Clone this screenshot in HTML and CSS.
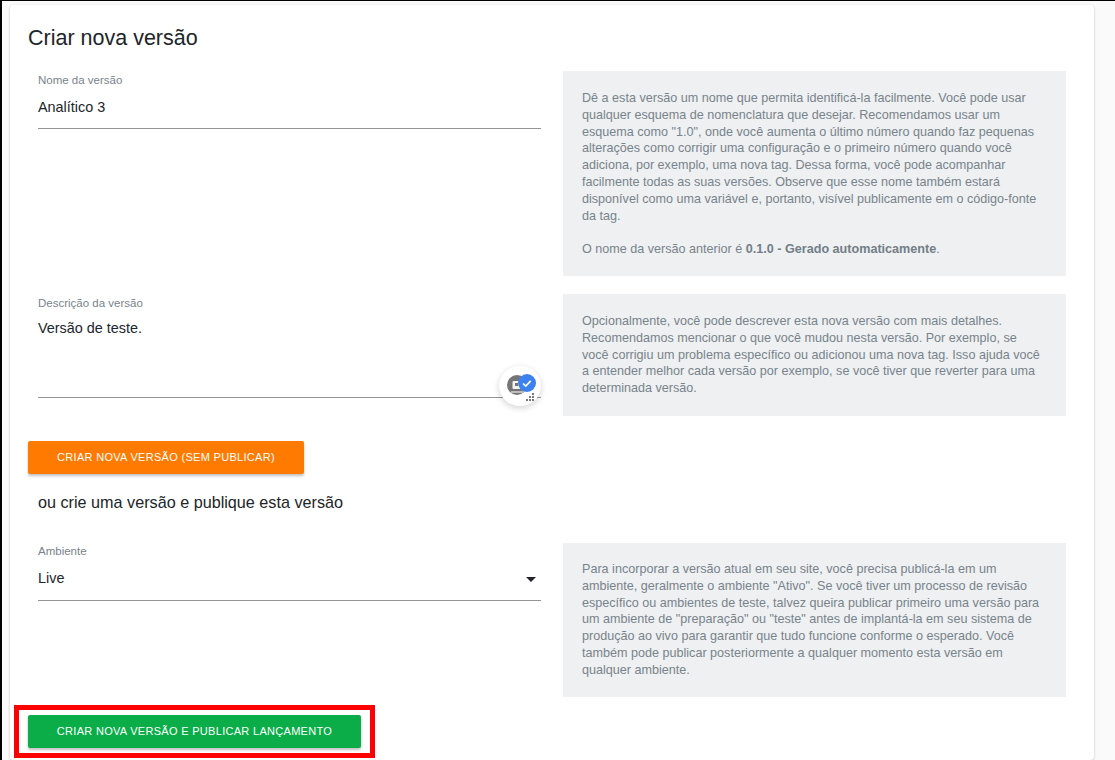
FILE: index.html
```html
<!DOCTYPE html>
<html lang="pt">
<head>
<meta charset="utf-8">
<title>Criar nova versão</title>
<link rel="stylesheet" href="styles.css">
</head>
<body>
<main class="card">
  <h1 class="title">Criar nova versão</h1>

  <section class="row row-name">
    <div class="field">
      <label class="label">Nome da versão</label>
      <div class="value">Analítico 3</div>
    </div>
    <aside class="help help-name">
      <p>Dê a esta versão um nome que permita identificá-la facilmente. Você pode usar qualquer esquema de nomenclatura que desejar. Recomendamos usar um esquema como "1.0", onde você aumenta o último número quando faz pequenas alterações como corrigir uma configuração e o primeiro número quando você adiciona, por exemplo, uma nova tag. Dessa forma, você pode acompanhar facilmente todas as suas versões. Observe que esse nome também estará disponível como uma variável e, portanto, visível publicamente em o código-fonte da tag.</p>
      <p class="para-gap">O nome da versão anterior é <strong>0.1.0 - Gerado automaticamente</strong>.</p>
    </aside>
  </section>

  <section class="row row-desc">
    <div class="field">
      <label class="label">Descrição da versão</label>
      <div class="value value-area">Versão de teste.</div>
      <div class="grammar">
        <svg class="grammar-icon" width="42" height="42" viewBox="0 0 42 42" aria-hidden="true">
          <circle cx="18" cy="19" r="10" fill="#757575"/>
          <rect x="13.500" y="15" width="8" height="8" rx="1" fill="#f2f2f2"/>
          <rect x="16" y="17" width="3" height="3" fill="#757575"/>
          <rect x="12" y="25" width="13" height="2" fill="#bdbdbd"/>
          <circle cx="28" cy="17" r="9" fill="#3b82f0"/>
          <path d="M24 17.500l2.800 2.600 4.900-5.200" fill="none" stroke="#fff" stroke-width="1.700"/>
          <g fill="#777">
            <rect x="33" y="27" width="2" height="2"/>
            <rect x="30" y="30" width="2" height="2"/>
            <rect x="33" y="30" width="2" height="2"/>
            <rect x="27" y="33" width="2" height="2"/>
            <rect x="30" y="33" width="2" height="2"/>
            <rect x="33" y="33" width="2" height="2"/>
          </g>
        </svg>
      </div>
    </div>
    <aside class="help help-desc">
      <p>Opcionalmente, você pode descrever esta nova versão com mais detalhes. Recomendamos mencionar o que você mudou nesta versão. Por exemplo, se você corrigiu um problema específico ou adicionou uma nova tag. Isso ajuda você a entender melhor cada versão por exemplo, se você tiver que reverter para uma determinada versão.</p>
    </aside>
  </section>

  <button class="btn btn-orange" type="button">Criar nova versão (sem publicar)</button>

  <p class="or-text">ou crie uma versão e publique esta versão</p>

  <section class="row row-env">
    <div class="field">
      <label class="label label-env">Ambiente</label>
      <div class="value value-select">Live<span class="caret"></span></div>
    </div>
    <aside class="help help-env">
      <p>Para incorporar a versão atual em seu site, você precisa publicá-la em um ambiente, geralmente o ambiente "Ativo". Se você tiver um processo de revisão específico ou ambientes de teste, talvez queira publicar primeiro uma versão para um ambiente de "preparação" ou "teste" antes de implantá-la em seu sistema de produção ao vivo para garantir que tudo funcione conforme o esperado. Você também pode publicar posteriormente a qualquer momento esta versão em qualquer ambiente.</p>
    </aside>
  </section>

  <div class="highlight">
    <button class="btn btn-green" type="button">Criar nova versão e publicar lançamento</button>
  </div>
</main>
</body>
</html>
```
FILE: styles.css
```css
* {
  box-sizing: border-box;
}

html,
body {
  height: 760px;
  overflow: hidden;
}

body {
  margin: 0;
  padding: 4px 21px 0 8px;
  background: #fafafa;
  border-top: 1px solid #000;
  border-left: 2px solid #000;
  font-family: "Liberation Sans", Arial, sans-serif;
  color: #212529;
}

.card {
  position: relative;
  height: 755px;
  padding: 1px 28px 0 18px;
  background: #fff;
  border-radius: 4px;
  box-shadow: 0 1px 3px rgba(0, 0, 0, 0.2);
}

.title {
  margin: 17px 0 0;
  font-size: 21.500px;
  line-height: 30px;
  font-weight: 400;
}

.row {
  display: grid;
  grid-template-columns: 503px 503px;
  column-gap: 22px;
  margin-left: 10px;
}

.row-name {
  margin-top: 18px;
  height: 205px;
}

.row-desc {
  margin-top: 18px;
  height: 122px;
}

.row-env {
  margin-top: 31px;
  height: 154px;
}

.field {
  position: relative;
}

.label {
  display: block;
  margin-top: 2px;
  font-size: 11.500px;
  line-height: 14px;
  color: #78838c;
}

.label-env {
  margin-top: 1px;
}

.value {
  height: 42px;
  padding-top: 10px;
  font-size: 14.400px;
  line-height: 20px;
  color: #212529;
  border-bottom: 1px solid #949494;
}

.value-area {
  height: 88px;
  padding-top: 8px;
}

.value-select {
  display: flex;
  justify-content: space-between;
  height: 43px;
  padding-right: 5px;
}

.caret {
  width: 0;
  height: 0;
  margin-top: 9px;
  border-left: 5px solid transparent;
  border-right: 5px solid transparent;
  border-top: 5px solid #212529;
}

.grammar {
  position: absolute;
  left: 461px;
  top: 72px;
  width: 42px;
  height: 40px;
  border-radius: 50%;
  background: #fff;
  box-shadow: 0 2px 6px rgba(0, 0, 0, 0.18);
}

.grammar-icon {
  display: block;
}

.help {
  padding: 19px 19px 0;
  background: #eef0f1;
  font-size: 12.600px;
  line-height: 16.800px;
  color: #78838c;
}

.help-desc {
  padding-right: 22px;
}

.help-env {
  padding-top: 18px;
}

.help p {
  margin: 0;
}

.help .para-gap {
  margin-top: 16.800px;
}

.help strong {
  font-weight: 700;
  color: #737e87;
}

.btn {
  display: block;
  height: 33px;
  padding: 0 0 2px;
  border: 0;
  border-radius: 2px;
  color: #fff;
  font-family: inherit;
  font-size: 11px;
  letter-spacing: 0.3px;
  text-transform: uppercase;
  box-shadow: 0 2px 3px rgba(0, 0, 0, 0.25);
}

.btn-orange {
  width: 276px;
  margin-top: 25px;
  background: #ff7a00;
}

.btn-green {
  width: 333px;
  background: #0aad48;
}

.or-text {
  margin: 18px 0 0 10px;
  font-size: 16.200px;
  line-height: 20px;
}

.highlight {
  width: 361px;
  height: 53px;
  margin: 8px 0 0 -14px;
  padding: 5px 9px 0;
  border: 5px solid #f00;
}
```
